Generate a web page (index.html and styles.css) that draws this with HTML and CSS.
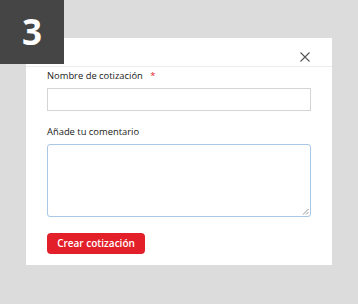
FILE: index.html
```html
<!DOCTYPE html>
<html lang="es">
<head>
<meta charset="utf-8">
<link rel="stylesheet" href="styles.css">
</head>
<body>
<div class="stage">
  <div class="step">3</div>
  <div class="modal">
    <div class="modal-header">
      <svg class="close" width="10" height="10" viewBox="0 0 10 10"><path d="M0.5 0.5L9.5 9.5M9.5 0.5L0.5 9.5" stroke="#555" stroke-width="1.1" fill="none"/></svg>
    </div>
    <div class="modal-body">
      <label class="label">Nombre de cotización <span class="req">*</span></label>
      <div class="input"></div>
      <label class="label label-2">Añade tu comentario</label>
      <div class="textarea">
        <svg class="grip" width="7" height="7" viewBox="0 0 7 7"><path d="M6.5 1L1 6.5M6.5 4L4 6.5" stroke="#888" stroke-width="0.9" fill="none"/></svg>
      </div>
      <button class="btn">Crear cotización</button>
    </div>
  </div>
</div>
</body>
</html>
```
FILE: styles.css
```css
html, body {
  margin: 0;
  padding: 0;
}
body {
  background: #dcdcdc;
  width: 358px;
  height: 304px;
  overflow: hidden;
  font-family: "Open Sans", "Noto Sans", sans-serif;
}
.stage {
  position: relative;
  padding: 38px 0 0 26px;
}
.step {
  position: absolute;
  left: 0;
  top: 0;
  width: 64px;
  height: 64px;
  background: #454545;
  color: #fff;
  font-family: "Open Sans", sans-serif;
  font-weight: 700;
  font-size: 35px;
  line-height: 64px;
  text-align: center;
  z-index: 2;
}
.modal {
  width: 306px;
  height: 227px;
  background: #fff;
  box-sizing: border-box;
}
.modal-header {
  height: 29px;
  border-bottom: 1px solid #ececec;
  display: flex;
  justify-content: flex-end;
  align-items: center;
  padding-right: 22px;
  padding-top: 10px;
  box-sizing: border-box;
}
.close {
  display: block;
}
.modal-body {
  padding: 2px 21px 0 21px;
  display: flex;
  flex-direction: column;
  align-items: flex-start;
}
.label {
  font-size: 9.4px;
  color: #222;
  line-height: 14px;
}
.req {
  color: #e3262c;
  margin-left: 5px;
}
.input {
  margin-top: 5px;
  width: 264px;
  height: 23px;
  border: 1px solid #d4d4d4;
  box-sizing: border-box;
}
.label-2 {
  margin-top: 14px;
}
.textarea {
  margin-top: 5px;
  width: 264px;
  height: 73px;
  border: 1px solid #a9c7e6;
  border-radius: 3px;
  box-sizing: border-box;
  position: relative;
}
.grip {
  position: absolute;
  right: 1px;
  bottom: 1px;
}
.btn {
  margin-top: 16px;
  height: 21px;
  width: 98px;
  padding: 0;
  white-space: nowrap;
  background: #e3202a;
  color: #fff;
  border: none;
  border-radius: 4px;
  font-family: "Open Sans", sans-serif;
  font-weight: 600;
  font-size: 10px;
  line-height: 21px;
  text-align: center;
}
```
